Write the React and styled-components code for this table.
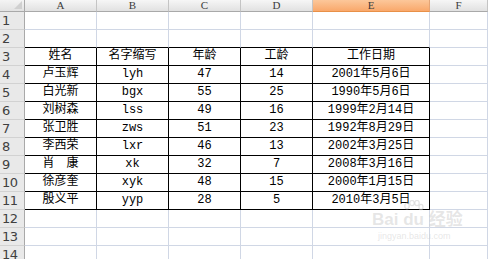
import React from "react";
import styled, { createGlobalStyle } from "styled-components";

const GlobalStyle = createGlobalStyle`
  html, body {
    margin: 0;
    padding: 0;
    background: #ffffff;
    overflow: hidden;
  }
`;

const COLS = ["A", "B", "C", "D", "E", "F"];

const rows = [
  ["姓名", "名字缩写", "年龄", "工龄", "工作日期"],
  ["卢玉辉", "lyh", "47", "14", "2001年5月6日"],
  ["白光新", "bgx", "55", "25", "1990年5月6日"],
  ["刘树森", "lss", "49", "16", "1999年2月14日"],
  ["张卫胜", "zws", "51", "23", "1992年8月29日"],
  ["李西荣", "lxr", "46", "13", "2002年3月25日"],
  ["肖\u3000康", "xk", "32", "7", "2008年3月16日"],
  ["徐彦奎", "xyk", "48", "15", "2000年1月15日"],
  ["殷义平", "yyp", "28", "5", "2010年3月5日"],
];

const Page = styled.div`
  position: relative;
  width: 488px;
  height: 259px;
  overflow: hidden;
`;

const Sheet = styled.div`
  display: grid;
  grid-template-columns: 25px 72px 72px 72px 72px 117px 1fr;
  grid-template-rows: 12px repeat(14, 18px);
  width: 488px;
`;

const Corner = styled.div`
  box-sizing: border-box;
  background: linear-gradient(#f4f4f4, #e2e2e2);
  border-right: 1px solid #a9a9a9;
  border-bottom: 1px solid #a9a9a9;
  position: relative;
  &::after {
    content: "";
    position: absolute;
    right: 2px;
    bottom: 2px;
    border-left: 8px solid transparent;
    border-bottom: 8px solid #d0d0d0;
  }
`;

const ColHead = styled.div`
  box-sizing: border-box;
  background: ${(p) =>
    p.$active
      ? "linear-gradient(#fcc79a, #f9a86b)"
      : "linear-gradient(#f6f6f6, #e1e1e1)"};
  border-right: 1px solid ${(p) => (p.$active ? "#e3a476" : "#c4c4c4")};
  border-bottom: 1px solid ${(p) => (p.$active ? "#e89048" : "#a9a9a9")};
  font-family: "Liberation Serif", serif;
  font-size: 11px;
  line-height: 11px;
  color: #3c3c3c;
  text-align: center;
`;

const RowHead = styled.div`
  box-sizing: border-box;
  background: #e9e9e9;
  border-right: 1px solid #a9a9a9;
  border-bottom: 1px solid #d2d2d2;
  font-family: "DejaVu Sans", sans-serif;
  font-size: 13px;
  line-height: 17px;
  color: #404040;
  padding-left: 2px;
  letter-spacing: -0.5px;
`;

const Cell = styled.div`
  box-sizing: border-box;
  border-right: 1px solid ${(p) => (p.$boxRight ? "#000" : "#d0d7e5")};
  border-bottom: 1px solid ${(p) => (p.$boxBottom ? "#000" : "#d0d7e5")};
  font-family: "Liberation Mono", "Noto Sans CJK SC", monospace;
  font-size: 12px;
  line-height: 17px;
  color: #000;
  text-align: center;
  white-space: nowrap;
  overflow: hidden;
`;

const Watermark = styled.div`
  position: absolute;
  left: 372px;
  top: 200px;
  color: rgba(200, 200, 200, 0.45);
  font-family: "Liberation Sans", "Noto Sans CJK SC", sans-serif;
  pointer-events: none;
`;

const MarkTitle = styled.div`
  display: flex;
  align-items: center;
  font-size: 17px;
  font-weight: bold;
  line-height: 18px;
  margin-top: 11px;
`;

const MarkUrl = styled.div`
  font-size: 9px;
  line-height: 10px;
  margin-top: 2px;
  padding-left: 6px;
`;

const Paw = styled.svg`
  position: absolute;
  left: 30px;
  top: 0px;
`;

export default function App() {
  const total = 14;
  return (
    <>
      <GlobalStyle />
      <Page>
        <Sheet>
          <Corner />
          {COLS.map((c) => (
            <ColHead key={c} $active={c === "E"}>
              {c}
            </ColHead>
          ))}
          {Array.from({ length: total }, (_, i) => {
            const r = i + 1;
            const data = r >= 3 && r <= 11 ? rows[r - 3] : null;
            return (
              <React.Fragment key={r}>
                <RowHead>{r}</RowHead>
                {COLS.map((c, ci) => {
                  const inBox = data && ci < 5;
                  const aboveBox = r === 2 && ci < 5;
                  return (
                    <Cell
                      key={c}
                      $boxRight={inBox}
                      $boxBottom={inBox || aboveBox}
                    >
                      {data && ci < 5 ? data[ci] : ""}
                    </Cell>
                  );
                })}
              </React.Fragment>
            );
          })}
        </Sheet>
        <Watermark>
          <Paw width="22" height="16" viewBox="0 0 22 16">
            <g fill="none" stroke="rgba(200,200,200,0.5)" strokeWidth="1.2">
              <ellipse cx="5" cy="6" rx="2.2" ry="2.8" />
              <ellipse cx="10" cy="3" rx="2.2" ry="2.6" />
              <ellipse cx="15" cy="3" rx="2.2" ry="2.6" />
              <ellipse cx="19" cy="7" rx="2" ry="2.6" />
            </g>
          </Paw>
          <MarkTitle>Bai du 经验</MarkTitle>
          <MarkUrl>jingyan.baidu.com</MarkUrl>
        </Watermark>
      </Page>
    </>
  );
}
